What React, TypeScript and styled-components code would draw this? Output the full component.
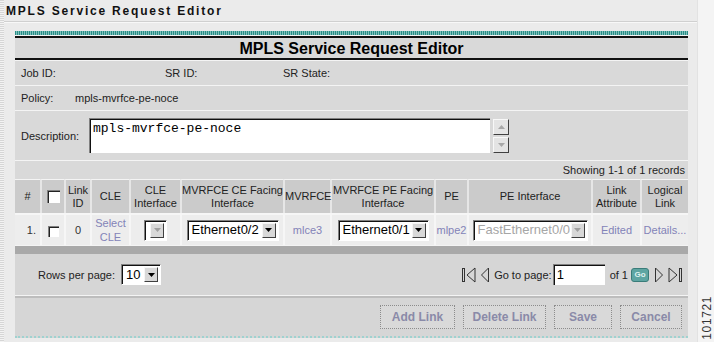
import React from 'react';
import styled, { createGlobalStyle } from 'styled-components';

const sans = '"Liberation Sans", Arial, sans-serif';
const linkColor = '#8383b8';

const GlobalStyle = createGlobalStyle`
  html, body {
    margin: 0;
    padding: 0;
  }
  body {
    width: 714px;
    height: 342px;
    overflow: hidden;
    background: #ebebeb;
    font-family: ${sans};
    color: #222;
  }
`;

const Page = styled.div`
  display: flex;
  height: 342px;
`;

const LeftRule = styled.div`
  width: 4px;
  flex: none;
  background: repeating-linear-gradient(180deg, #d6d6d6 0 1px, #f3f3f3 1px 2px);
`;

const Content = styled.div`
  width: 693px;
  flex: none;
  display: flex;
  flex-direction: column;
`;

const RightMargin = styled.div`
  flex: 1;
  background: #f4f4f4;
  border-left: 1px solid #e2e2e2;
  display: flex;
  flex-direction: column;
  justify-content: flex-end;
  align-items: flex-end;
  padding: 0 1px 2px 0;
`;

const FigureNo = styled.span`
  writing-mode: vertical-rl;
  transform: rotate(180deg);
  font-size: 12px;
  line-height: 12px;
  letter-spacing: 0.6px;
  color: #333;
`;

const PageHeading = styled.h1`
  margin: 0;
  height: 21px;
  padding-left: 2px;
  font-size: 12px;
  font-weight: bold;
  letter-spacing: 1.8px;
  line-height: 22px;
  color: #111;
  border-bottom: 1px solid #d0d0d0;
  box-shadow: 0 1px 0 #f8f8f8;
`;

const Panel = styled.section`
  margin: 9px 9px 0 11px;
  display: flex;
  flex-direction: column;
  background: #d9d9d9;
`;

const TealRule = styled.div`
  height: 4px;
  background: repeating-linear-gradient(90deg, #2a8d87 0 1px, #7fc2bd 1px 2px);
  border-bottom: 1px solid #f4f4f4;
`;

const TitleBar = styled.h2`
  margin: 0;
  height: 20px;
  border-top: 2px solid #111;
  border-bottom: 2px solid #111;
  font-size: 16px;
  font-weight: bold;
  line-height: 21px;
  text-align: center;
  color: #000;
`;

const Row = styled.div<{ $h: number }>`
  height: ${p => p.$h}px;
  border-top: 1px solid #f4f4f4;
  display: flex;
  align-items: center;
  padding-left: 6px;
  font-size: 11px;
`;

const InfoGrid = styled.div`
  display: grid;
  grid-template-columns: 144px 118px 1fr;
  width: 100%;
`;

const Label = styled.span<{ $w?: number }>`
  width: ${p => (p.$w ? `${p.$w}px` : 'auto')};
  flex: none;
`;

const TextArea = styled.div`
  width: 401px;
  height: 35px;
  box-sizing: border-box;
  background: #fff;
  border-top: 1px solid #808080;
  border-left: 1px solid #808080;
  box-shadow: inset 1px 1px 0 #111;
  padding: 3px 0 0 3px;
  font-family: "Liberation Mono", "Courier New", monospace;
  font-size: 13px;
  line-height: 14px;
  color: #000;
`;

const ScrollCol = styled.div`
  display: flex;
  flex-direction: column;
  gap: 2px;
  margin-left: 3px;
`;

const ScrollBtn = styled.div`
  width: 16px;
  height: 16px;
  box-sizing: border-box;
  background: #e4e4e4;
  border-top: 1px solid #f8f8f8;
  border-left: 1px solid #f8f8f8;
  border-right: 1px solid #404040;
  border-bottom: 1px solid #404040;
  display: flex;
  align-items: center;
  justify-content: center;
`;

const RecordCount = styled.div`
  height: 18px;
  border-top: 1px solid #f4f4f4;
  font-size: 11px;
  line-height: 19px;
  text-align: right;
  padding-right: 3px;
`;

const Table = styled.table`
  width: 100%;
  border-collapse: separate;
  border-spacing: 0;
  table-layout: fixed;
  font-size: 11px;
`;

const Th = styled.th`
  background: #cbcbcb;
  font-weight: normal;
  height: 33px;
  padding: 0;
  line-height: 13px;
  color: #222;
  border-top: 1px solid #f4f4f4;
  border-left: 2px solid #e6e6e6;
  &:first-child {
    border-left: none;
  }
`;

const Td = styled.td<{ $align?: string }>`
  background: #ededed;
  height: 30px;
  padding: 0;
  line-height: 14px;
  text-align: ${p => p.$align || 'center'};
  color: #333;
  border-top: 2px solid #f6f6f6;
  border-left: 2px solid #f6f6f6;
  &:first-child {
    border-left: none;
    padding-right: 4px;
  }
`;

const Link = styled.span`
  color: ${linkColor};
`;

const CheckBox = styled.span<{ $size: number }>`
  display: inline-block;
  vertical-align: middle;
  width: ${p => p.$size}px;
  height: ${p => p.$size}px;
  box-sizing: border-box;
  background: #fff;
  border-top: 1px solid #808080;
  border-left: 1px solid #808080;
  box-shadow: inset 1px 1px 0 #222;
`;

const SelectBox = styled.span<{ $w: number; $disabled?: boolean }>`
  display: inline-flex;
  align-items: center;
  vertical-align: middle;
  width: ${p => p.$w}px;
  height: 21px;
  box-sizing: border-box;
  background: #fff;
  border-top: 1px solid #808080;
  border-left: 1px solid #808080;
  border-right: 1px solid #fff;
  border-bottom: 1px solid #fff;
  box-shadow: inset 1px 1px 0 #111;
  padding: 0 2px 0 4px;
  font-size: 13px;
  text-align: left;
  color: ${p => (p.$disabled ? '#a6a6a6' : '#000')};
`;

const SelectValue = styled.span`
  flex: 1;
  white-space: nowrap;
  overflow: hidden;
`;

const SelectArrow = styled.span`
  width: 14px;
  height: 15px;
  box-sizing: border-box;
  background: #d8d8d8;
  border-top: 1px solid #f6f6f6;
  border-left: 1px solid #f6f6f6;
  border-right: 1px solid #404040;
  border-bottom: 1px solid #404040;
  display: flex;
  align-items: center;
  justify-content: center;
`;

const DarkBar = styled.div`
  height: 8px;
  background: #a9a9a9;
  border-top: 1px solid #f4f4f4;
`;

const PagerRow = styled.div`
  height: 41px;
  background: #d6d6d6;
  display: flex;
  align-items: center;
  padding: 0 6px 0 23px;
  font-size: 11px;
  border-bottom: 1px solid #f4f4f4;
`;

const Pager = styled.div`
  margin-left: auto;
  display: flex;
  align-items: center;
`;

const PagerItem = styled.span<{ $gap: number }>`
  display: flex;
  align-items: center;
  margin-left: ${p => p.$gap}px;
`;

const PageInput = styled.span`
  width: 52px;
  height: 21px;
  box-sizing: border-box;
  background: #fff;
  border-top: 1px solid #808080;
  border-left: 1px solid #808080;
  box-shadow: inset 1px 1px 0 #111;
  padding-left: 3px;
  font-size: 13px;
  line-height: 19px;
  color: #000;
`;

const GoButton = styled.span`
  width: 18px;
  height: 14px;
  box-sizing: border-box;
  border-radius: 3px;
  background: #5ea5a2;
  border: 1px solid #3a7c79;
  color: #dff2f0;
  font-size: 8px;
  font-weight: bold;
  line-height: 12px;
  text-align: center;
`;

const ButtonRow = styled.div`
  height: 38px;
  border-top: 2px solid #bdbdbd;
  border-bottom: 2px dotted #9fd2d0;
  background: #d6d6d6;
  display: flex;
  align-items: center;
  justify-content: flex-end;
  gap: 8px;
  padding-right: 6px;
`;

const ActionButton = styled.span<{ $w: number }>`
  width: ${p => p.$w}px;
  height: 24px;
  box-sizing: border-box;
  border: 1px dotted #8c8c8c;
  background: #d9d9d9;
  color: #8a8aa8;
  font-size: 12px;
  font-weight: bold;
  line-height: 22px;
  text-align: center;
`;

const Select = ({ w, value, disabled }: { w: number; value: string; disabled?: boolean }) => (
  <SelectBox $w={w} $disabled={disabled}>
    <SelectValue>{value}</SelectValue>
    <SelectArrow>
      <svg width="7" height="4" viewBox="0 0 7 4">
        <polygon points="0,0 7,0 3.5,4" fill={disabled ? '#a0a0a0' : '#000'} />
      </svg>
    </SelectArrow>
  </SelectBox>
);

const ArrowIcon = ({ dir, bar }: { dir: 'left' | 'right'; bar?: boolean }) => {
  const w = bar ? 14 : 8;
  const flip = dir === 'right' ? `translate(${w} 0) scale(-1 1)` : undefined;
  return (
    <svg width={w} height="16" viewBox={`0 0 ${w} 16`}>
      <g transform={flip} fill="none" stroke="#333" strokeWidth="1">
        {bar && <rect x="0.5" y="1.5" width="2" height="13" />}
        <polygon points={bar ? '13,1 5,8 13,15' : '7.5,1 0.5,8 7.5,15'} />
      </g>
    </svg>
  );
};

const columns: [number, React.ReactNode][] = [
  [25, '#'],
  [24, <CheckBox $size={13} />],
  [26, <>Link<br />ID</>],
  [39, 'CLE'],
  [51, <>CLE<br />Interface</>],
  [103, <>MVRFCE CE Facing<br />Interface</>],
  [47, 'MVRFCE'],
  [104, <>MVRFCE PE Facing<br />Interface</>],
  [33, 'PE'],
  [124, 'PE Interface'],
  [49, <>Link<br />Attribute</>],
  [48, <>Logical<br />Link</>],
];

const App = () => (
  <>
    <GlobalStyle />
    <Page>
      <LeftRule />
      <Content>
        <PageHeading>MPLS Service Request Editor</PageHeading>
        <Panel>
          <TealRule />
          <TitleBar>MPLS Service Request Editor</TitleBar>
          <Row $h={24}>
            <InfoGrid>
              <span>Job ID:</span>
              <span>SR ID:</span>
              <span>SR State:</span>
            </InfoGrid>
          </Row>
          <Row $h={24}>
            <Label $w={54}>Policy:</Label>
            <span>mpls-mvrfce-pe-noce</span>
          </Row>
          <Row $h={49}>
            <Label $w={68}>Description:</Label>
            <TextArea>mpls-mvrfce-pe-noce</TextArea>
            <ScrollCol>
              <ScrollBtn>
                <svg width="7" height="4" viewBox="0 0 7 4">
                  <polygon points="0,4 7,4 3.5,0" fill="#a8a8a8" />
                </svg>
              </ScrollBtn>
              <ScrollBtn>
                <svg width="7" height="4" viewBox="0 0 7 4">
                  <polygon points="0,0 7,0 3.5,4" fill="#a8a8a8" />
                </svg>
              </ScrollBtn>
            </ScrollCol>
          </Row>
          <RecordCount>Showing 1-1 of 1 records</RecordCount>
          <Table>
            <colgroup>
              {columns.map(([w], i) => (
                <col key={i} style={{ width: w }} />
              ))}
            </colgroup>
            <thead>
              <tr>
                {columns.map(([, label], i) => (
                  <Th key={i}>{label}</Th>
                ))}
              </tr>
            </thead>
            <tbody>
              <tr>
                <Td $align="right">1.</Td>
                <Td><CheckBox $size={11} /></Td>
                <Td>0</Td>
                <Td><Link>Select<br />CLE</Link></Td>
                <Td><Select w={23} value="" disabled /></Td>
                <Td><Select w={92} value="Ethernet0/2" /></Td>
                <Td><Link>mlce3</Link></Td>
                <Td><Select w={91} value="Ethernet0/1" /></Td>
                <Td><Link>mlpe2</Link></Td>
                <Td><Select w={115} value="FastEthernet0/0" disabled /></Td>
                <Td><Link>Edited</Link></Td>
                <Td><Link>Details...</Link></Td>
              </tr>
            </tbody>
          </Table>
          <DarkBar />
          <PagerRow>
            <span>Rows per page:</span>
            <PagerItem $gap={6}>
              <Select w={40} value="10" />
            </PagerItem>
            <Pager>
              <PagerItem $gap={0}><ArrowIcon dir="left" bar /></PagerItem>
              <PagerItem $gap={5}><ArrowIcon dir="left" /></PagerItem>
              <PagerItem $gap={5}>Go to page:</PagerItem>
              <PagerItem $gap={1}><PageInput>1</PageInput></PagerItem>
              <PagerItem $gap={5}>of 1</PagerItem>
              <PagerItem $gap={3}><GoButton>Go</GoButton></PagerItem>
              <PagerItem $gap={6}><ArrowIcon dir="right" /></PagerItem>
              <PagerItem $gap={5}><ArrowIcon dir="right" bar /></PagerItem>
            </Pager>
          </PagerRow>
          <ButtonRow>
            <ActionButton $w={75}>Add Link</ActionButton>
            <ActionButton $w={83}>Delete Link</ActionButton>
            <ActionButton $w={58}>Save</ActionButton>
            <ActionButton $w={62}>Cancel</ActionButton>
          </ButtonRow>
        </Panel>
      </Content>
      <RightMargin>
        <FigureNo>101721</FigureNo>
      </RightMargin>
    </Page>
  </>
);

export default App;
